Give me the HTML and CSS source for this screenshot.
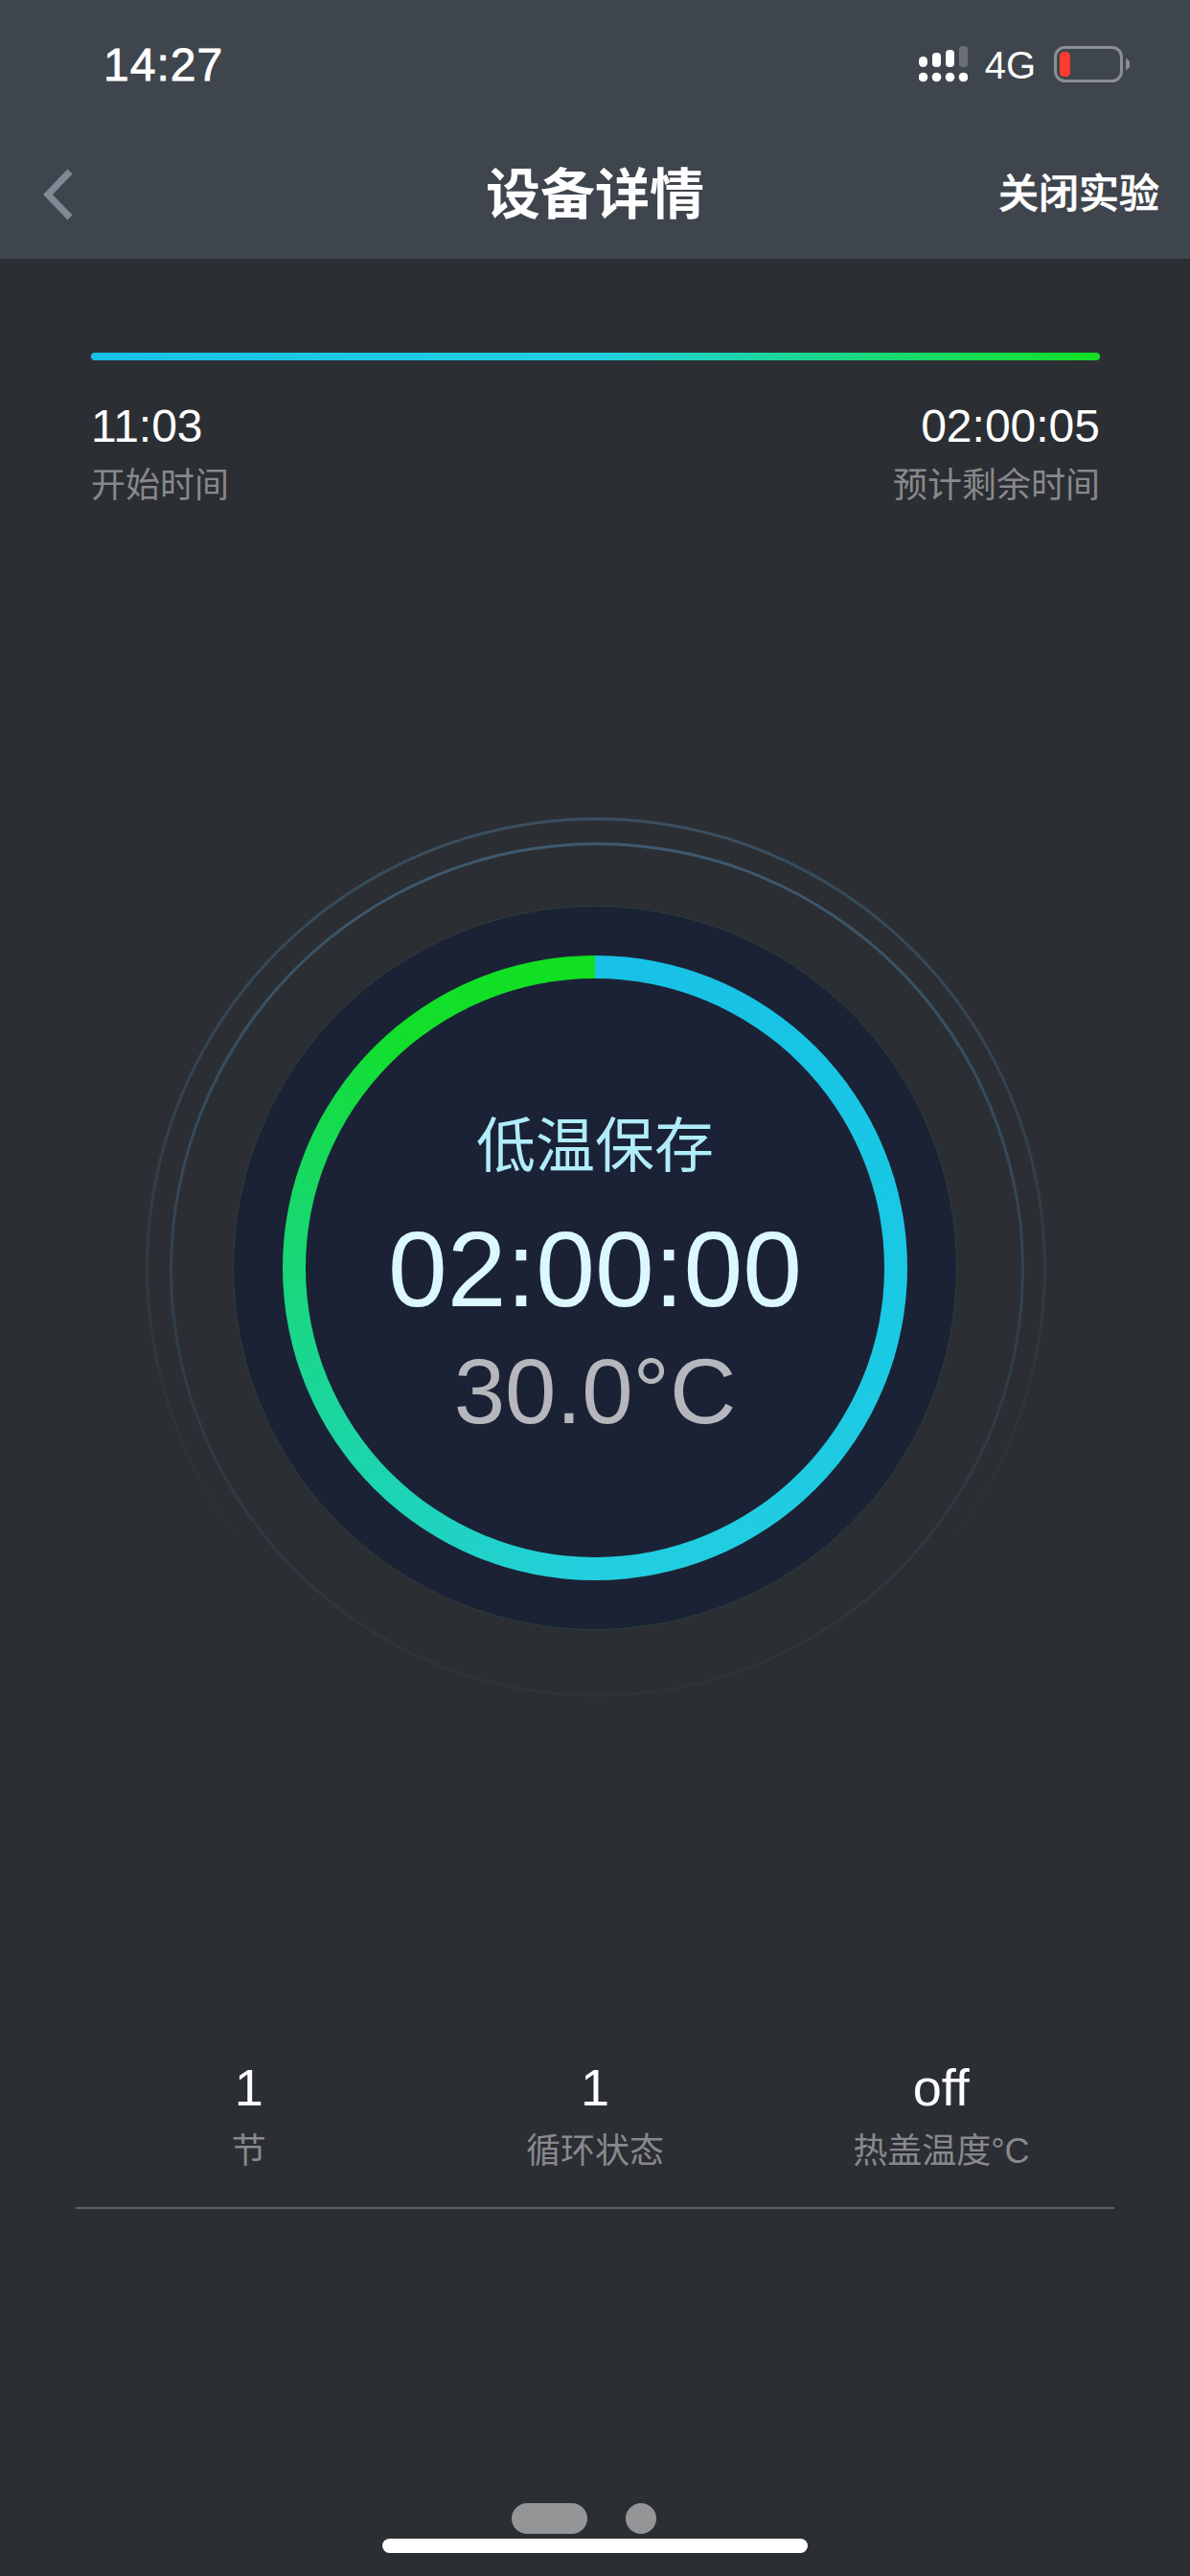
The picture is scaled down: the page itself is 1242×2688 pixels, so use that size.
FILE: index.html
```html
<!DOCTYPE html>
<html lang="zh-CN">
<head>
    <meta charset="UTF-8">
    <meta name="viewport" content="width=device-width, initial-scale=1.0">
    <title>设备详情</title>
    <link rel="stylesheet" href="styles.css">
</head>
<body>
    <div class="page">
        <header class="top-bar">
            <div class="status-bar">
                <span class="clock">14:27</span>
                <div class="status-icons">
                    <svg class="signal" width="51" height="38" viewBox="0 0 51 38">
                        <rect x="0" y="11" width="9" height="11" rx="4.5" fill="#fff"/>
                        <rect x="14" y="7" width="9" height="15" rx="4" fill="#fff"/>
                        <rect x="28" y="4" width="9" height="18" rx="4" fill="#fff"/>
                        <rect x="42" y="0" width="9" height="22" rx="3.5" fill="#6b7078"/>
                        <circle cx="4.5" cy="32.5" r="4.8" fill="#fff"/>
                        <circle cx="18.5" cy="32.5" r="4.8" fill="#fff"/>
                        <circle cx="32.5" cy="32.5" r="4.8" fill="#fff"/>
                        <circle cx="46.5" cy="32.5" r="4.8" fill="#fff"/>
                    </svg>
                    <span class="network">4G</span>
                    <svg class="battery" width="80" height="38" viewBox="0 0 80 38">
                        <rect x="1.5" y="1.5" width="69" height="35" rx="10" fill="none" stroke="#8b8e93" stroke-width="3"/>
                        <rect x="6" y="6" width="11" height="26" rx="4.5" fill="#ff3b30"/>
                        <path d="M75 12.500 L79 16 V22 L75 25.500 Z" fill="#8b8e93"/>
                    </svg>
                </div>
            </div>
            <nav class="nav-bar">
                <div class="nav-left">
                    <svg width="36" height="54" viewBox="0 0 36 54">
                        <path d="M31 3 L8 27 L31 51" fill="none" stroke="#7f8a96" stroke-width="7"/>
                    </svg>
                </div>
                <h1 class="nav-title">设备详情</h1>
                <div class="nav-action">关闭实验</div>
            </nav>
        </header>

        <section class="progress">
            <div class="progress-line"></div>
            <div class="progress-info">
                <div>
                    <div class="info-value">11:03</div>
                    <div class="info-label">开始时间</div>
                </div>
                <div class="align-right">
                    <div class="info-value">02:00:05</div>
                    <div class="info-label">预计剩余时间</div>
                </div>
            </div>
        </section>

        <section class="dial">
            <div class="halo-outer">
                <div class="halo-inner">
                    <div class="dial-disc">
                        <div class="dial-ring">
                            <div class="dial-center">
                                <div class="step-name">低温保存</div>
                                <div class="step-time">02:00:00</div>
                                <div class="step-temp">30.0°C</div>
                            </div>
                        </div>
                    </div>
                </div>
            </div>
        </section>

        <section class="stats">
            <div class="stat">
                <div class="stat-value">1</div>
                <div class="info-label">节</div>
            </div>
            <div class="stat">
                <div class="stat-value">1</div>
                <div class="info-label">循环状态</div>
            </div>
            <div class="stat">
                <div class="stat-value">off</div>
                <div class="info-label">热盖温度°C</div>
            </div>
        </section>

        <footer class="page-foot">
            <div class="pager">
                <span class="pager-active"></span>
                <span class="pager-dot"></span>
            </div>
            <div class="home-bar"></div>
        </footer>
    </div>
</body>
</html>
```

FILE: styles.css
```css
* {
    box-sizing: border-box;
}

body {
    margin: 0;
    background-color: #2b2e33;
    font-family: "Liberation Sans", "Noto Sans CJK SC", sans-serif;
    color: #fff;
}

.page {
    width: 1242px;
    height: 2688px;
    display: flex;
    flex-direction: column;
    overflow: hidden;
}

/* Top bar */
.top-bar {
    height: 270px;
    background-color: #3f454d;
}

.status-bar {
    height: 136px;
    padding: 44px 62px 0 108px;
    display: flex;
    justify-content: space-between;
    align-items: flex-start;
}

.clock {
    font-size: 48px;
    line-height: 48px;
    font-weight: 500;
    letter-spacing: 1px;
    -webkit-text-stroke: 0.8px #fff;
}

.status-icons {
    display: flex;
    align-items: flex-start;
    margin-top: 4px;
}

.network {
    margin: 0 19px 0 18px;
    font-size: 40px;
    line-height: 40px;
}

.nav-bar {
    height: 134px;
    padding: 0 32px;
    display: grid;
    grid-template-columns: 1fr auto 1fr;
    align-items: center;
}

.nav-left {
    padding-left: 10px;
    display: flex;
    align-items: center;
}

.nav-title {
    margin: 0;
    font-size: 57px;
    line-height: 68px;
    font-weight: 700;
}

.nav-action {
    font-size: 42px;
    line-height: 50px;
    font-weight: 500;
    text-align: right;
    -webkit-text-stroke: 0.6px #fff;
}

/* Progress */
.progress {
    padding: 98px 94px 0 95px;
}

.progress-line {
    height: 8px;
    border-radius: 4px;
    background: linear-gradient(90deg, #17c1e8 0%, #22cfe0 50%, #12e024 100%);
}

.progress-info {
    margin-top: 41px;
    display: flex;
    justify-content: space-between;
}

.align-right {
    text-align: right;
}

.info-value {
    font-size: 48px;
    line-height: 56px;
}

.info-label {
    font-size: 36px;
    line-height: 44px;
    color: #88898c;
}

.progress-info .info-label {
    margin-top: 12px;
}

/* Dial */
.dial {
    margin-top: 324px;
    padding-left: 2px;
    display: flex;
    justify-content: center;
}

.halo-outer,
.halo-inner,
.dial-disc,
.dial-ring,
.dial-center {
    display: flex;
    align-items: center;
    justify-content: center;
    border-radius: 50%;
}

.halo-outer {
    width: 940px;
    height: 940px;
    border: 3px solid transparent;
    background: linear-gradient(#2b2e33, #2b2e33) padding-box,
        linear-gradient(180deg, #3a4f60 0%, #2f3b45 50%, #2b2e33 85%) border-box;
}

.halo-inner {
    width: 892px;
    height: 892px;
    margin: 3px 0 0 2px;
    border: 3px solid transparent;
    background: linear-gradient(#2b2e33, #2b2e33) padding-box,
        linear-gradient(180deg, #3f5a6f 0%, #30404c 55%, #2e333a 100%) border-box;
}

.dial-disc {
    width: 756px;
    height: 756px;
    margin: 0 4px 3px 0;
    border: 1px solid #2c4038;
    background-color: #1b2235;
}

.dial-ring {
    width: 652px;
    height: 652px;
    padding: 24px;
    background: conic-gradient(#17c1e6 0deg, #1ac8e4 90deg, #22cfe0 180deg, #1bd6a0 240deg, #18d86c 280deg, #12df2c 320deg, #10e020 360deg);
}

.dial-center {
    width: 604px;
    height: 604px;
    padding-top: 18px;
    flex-direction: column;
    background-color: #1b2235;
}

.step-name {
    font-size: 62px;
    line-height: 80px;
    color: #b0ecfa;
}

.step-time {
    margin-top: 28px;
    font-size: 111px;
    line-height: 120px;
    color: #dcf8ff;
}

.step-temp {
    margin-top: 12px;
    font-size: 96px;
    line-height: 110px;
    color: #b6b7bd;
}

/* Stats */
.stats {
    margin: 354px 79px 0;
    padding-bottom: 36px;
    display: grid;
    grid-template-columns: repeat(3, 1fr);
    border-bottom: 2px solid #5e6166;
}

.stat {
    text-align: center;
}

.stat-value {
    font-size: 54px;
    line-height: 62px;
}

.stat .info-label {
    margin-top: 14px;
}

/* Bottom */
.page-foot {
    margin-top: auto;
    padding-bottom: 24px;
    display: flex;
    flex-direction: column;
    align-items: center;
    gap: 5px;
}

.pager {
    display: flex;
    align-items: center;
    gap: 40px;
    margin-right: 24px;
}

.pager-active {
    width: 79px;
    height: 32px;
    border-radius: 16px;
    background-color: #949596;
}

.pager-dot {
    width: 32px;
    height: 32px;
    border-radius: 50%;
    background-color: #949596;
}

.home-bar {
    width: 444px;
    height: 15px;
    border-radius: 8px;
    background-color: #fff;
}
```
